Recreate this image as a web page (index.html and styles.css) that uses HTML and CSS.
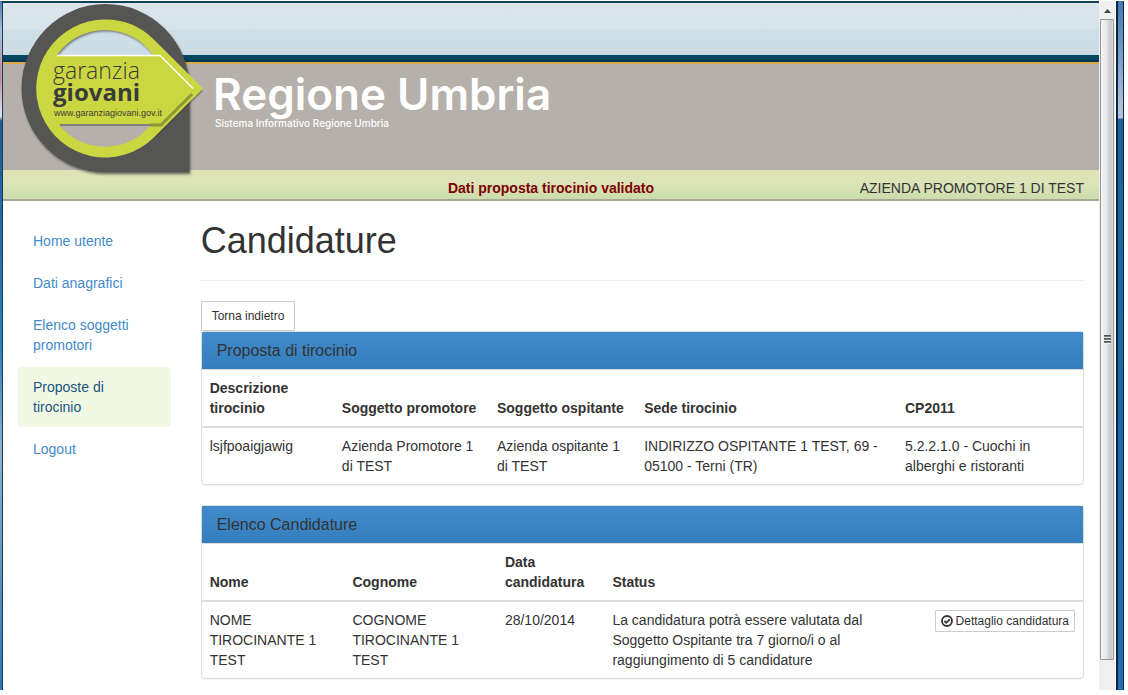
FILE: index.html
```html
<!DOCTYPE html>
<html lang="it">
<head>
<meta charset="utf-8">
<title>Candidature - Regione Umbria</title>
<link rel="stylesheet" href="styles.css">
</head>
<body>
<div class="window">
  <div class="edge-left"></div>
  <div class="page">
    <header class="banner">
      <div class="sky"></div>
      <div class="stripe"></div>
      <div class="brand">
        <p class="brand-name">Regione Umbria</p>
        <p class="brand-sub">Sistema Informativo Regione Umbria</p>
      </div>
      <div class="status-bar">
        <strong class="message">Dati proposta tirocinio validato</strong>
        <span class="user">AZIENDA PROMOTORE 1 DI TEST</span>
      </div>
      <svg class="logo" width="190" height="180" viewBox="18 0 190 180" role="img" aria-label="Garanzia Giovani">
        <defs>
          <filter id="soft" x="-10%" y="-10%" width="120%" height="120%">
            <feDropShadow dx="1" dy="2" stdDeviation="1" flood-color="#333" flood-opacity=".6"/>
          </filter>
        </defs>
        <path filter="url(#soft)" fill="#555753" fill-rule="evenodd" d="M105.500 4A84 84.500 0 0 1 189.500 88.500V172.500H105.500A84 84.250 0 0 1 105.500 4ZM105 29.500A59 59 0 0 0 105 147.500A59 59 0 0 0 105 29.500Z"/>
        <path fill="#41443a" opacity=".4" d="M203 91L156 138L153 135L199 89Z"/>
        <path fill="#cbd740" fill-rule="evenodd" d="M105 19.500A69 69 0 0 1 153.800 39.500L203 88.500L153.800 137.500A69 69 0 1 1 105 19.500ZM57 55H153A58.500 58.500 0 0 0 57 55ZM59 124.500A58.500 58.500 0 0 0 151 124.500Z"/>
        <path fill="none" stroke="#8c9838" stroke-width="3" d="M150 125H161L192 94"/>
        <path fill="none" stroke="#7d827a" stroke-width="2" d="M60 125H151"/>
        <path fill="none" stroke="#fff" stroke-width="1.500" d="M57 55.500H160L193 88.500"/>
        <text class="logo-light" x="53" y="79">garanzia</text>
        <text class="logo-bold" x="53" y="101">giovani</text>
        <text class="logo-url" x="54" y="116">www.garanziagiovani.gov.it</text>
      </svg>
    </header>
    <div class="columns">
      <nav class="sidebar">
        <a href="#">Home utente</a>
        <a href="#">Dati anagrafici</a>
        <a href="#">Elenco soggetti promotori</a>
        <a href="#" class="active" aria-current="page">Proposte di tirocinio</a>
        <a href="#">Logout</a>
      </nav>
      <main class="main">
        <h1>Candidature</h1>
        <button type="button" class="btn">Torna indietro</button>
        <section class="panel">
          <h2>Proposta di tirocinio</h2>
          <table class="proposal">
            <thead>
              <tr><th>Descrizione tirocinio</th><th>Soggetto promotore</th><th>Soggetto ospitante</th><th>Sede tirocinio</th><th>CP2011</th></tr>
            </thead>
            <tbody>
              <tr><td>lsjfpoaigjawig</td><td>Azienda Promotore 1 di TEST</td><td>Azienda ospitante 1 di TEST</td><td>INDIRIZZO OSPITANTE 1 TEST, 69 - 05100 - Terni (TR)</td><td>5.2.2.1.0 - Cuochi in alberghi e ristoranti</td></tr>
            </tbody>
          </table>
        </section>
        <section class="panel">
          <h2>Elenco Candidature</h2>
          <table class="applications">
            <thead>
              <tr><th>Nome</th><th>Cognome</th><th>Data candidatura</th><th>Status</th><th></th></tr>
            </thead>
            <tbody>
              <tr>
                <td>NOME TIROCINANTE 1 TEST</td><td>COGNOME TIROCINANTE 1 TEST</td><td>28/10/2014</td>
                <td>La candidatura potrà essere valutata dal Soggetto Ospitante tra 7 giorno/i o al raggiungimento di 5 candidature</td>
                <td class="action"><button type="button" class="btn btn-small"><svg class="check" width="12" height="12" viewBox="0 0 12 12" aria-hidden="true"><circle cx="6" cy="6" r="5" fill="none" stroke="#333" stroke-width="1.800"/><path d="M3.400 6L5.300 7.800L8.700 4.300" fill="none" stroke="#333" stroke-width="1.800"/></svg>Dettaglio candidatura</button></td>
              </tr>
            </tbody>
          </table>
        </section>
      </main>
    </div>
  </div>
  <div class="scrollbar">
    <svg class="arrow" width="15" height="18" viewBox="0 0 15 18" aria-hidden="true"><path d="M4 12L7.500 8L11 12Z" fill="#444"/></svg>
    <div class="thumb"><span class="grip"></span></div>
  </div>
  <div class="edge-right"></div>
</div>
</body>
</html>
```
FILE: styles.css
```css
* { box-sizing: border-box; }
body {
  margin: 0;
  background: #fff;
  color: #333;
  font: 14px/20px "Liberation Sans", Arial, sans-serif;
}
.window {
  display: flex;
  min-height: calc(100vh - 5px);
  padding: 1px 4px 0 0;
}
.edge-left {
  width: 3px;
  border-right: 1px solid #183a58;
  background: linear-gradient(#4b7db4 0, #a9bfdc 30px, #c08c98 75px, #dfe6f0 115px, #1f5b9a 120px, #2d7fc0 50%, #8fb2cc 65%, #2c78b4);
}
.page { flex: 1; min-width: 0; }

.banner { position: relative; border-top: 2px solid #0f4353; }
.sky {
  height: 52px;
  background: linear-gradient(#dbe6ec, #d7e3ea 27px, #d0dfe7 27px, #cddde5);
}
.stripe {
  height: 9px;
  border-bottom: 2px solid #dcaa4e;
  background: linear-gradient(#004a67, #00405a 5px, #06303f);
}
.brand {
  height: 106px;
  padding: 7px 15px 0 210px;
  background: #b5b0aa;
  color: #fff;
  font-family: Inter, "Open Sans", sans-serif;
  font-weight: 600;
}
.brand p { margin: 0; }
.brand-name { font-size: 44px; line-height: 46px; }
.brand .brand-sub { padding-left: 2px; font-size: 10px; font-weight: 500; line-height: 12px; }
.status-bar {
  display: grid;
  grid-template-columns: 1fr auto 1fr;
  height: 31px;
  padding: 8px 15px 0;
  border-bottom: 2px solid #aca699;
  background: linear-gradient(#dfe4b7, #dbe3b8 50%, #cbdcaa);
}
.message { grid-column: 2; color: #800000; }
.user { text-align: right; }
.logo { position: absolute; top: -3px; left: 15px; }
.logo text { fill: #3b3b3b; font-family: "Open Sans", sans-serif; }
.logo .logo-light { font-size: 23px; font-weight: 300; }
.logo .logo-bold { font-size: 24px; font-weight: 700; }
.logo .logo-url { font-family: "Liberation Sans", Arial, sans-serif; font-size: 9px; }

.columns { display: flex; padding-top: 20px; }
.sidebar {
  display: flex;
  flex-direction: column;
  gap: 2px;
  width: 16.6667%;
  padding: 0 15px;
}
.sidebar a {
  padding: 10px 15px;
  border-radius: 4px;
  color: #428bca;
  text-decoration: none;
}
.sidebar .active { background: #f1f9e4; color: #1b5480; }
.main { flex: 1; min-width: 0; padding: 0 15px; }
h1 {
  margin: 0 0 20px;
  padding-bottom: 19px;
  border-bottom: 1px solid #eee;
  font-size: 36px;
  font-weight: 400;
  line-height: 40px;
}
.btn {
  display: block;
  padding: 5px 10px;
  border: 1px solid #ccc;
  border-radius: 1px;
  background: #fff;
  color: #333;
  font: 12px/18px "Liberation Sans", Arial, sans-serif;
}
.btn-small {
  display: inline-flex;
  align-items: center;
  gap: 3px;
  padding: 1px 5px;
  white-space: nowrap;
}
.panel {
  margin-bottom: 20px;
  border: 1px solid #ddd;
  border-radius: 4px;
  box-shadow: 0 1px 1px rgba(0, 0, 0, .05);
}
.panel:last-child { margin-bottom: 10px; }
.panel h2 {
  margin: 0;
  padding: 10px 15px;
  border-bottom: 1px solid #ddd;
  background: linear-gradient(#428bca, #357ebd);
  font-size: 16px;
  font-weight: 400;
  line-height: 17px;
}
table { width: 100%; table-layout: fixed; border-collapse: collapse; }
th, td { padding: 8px; text-align: left; }
th { vertical-align: bottom; }
td { vertical-align: top; }
thead { border-bottom: 2px solid #ddd; }
.proposal th:nth-child(1) { width: 15%; }
.proposal th:nth-child(2) { width: 17.6%; }
.proposal th:nth-child(3) { width: 16.7%; }
.proposal th:nth-child(4) { width: 29.6%; }
.applications th:nth-child(1) { width: 16.2%; }
.applications th:nth-child(2) { width: 17.3%; }
.applications th:nth-child(3) { width: 12.2%; }
.applications th:nth-child(5) { width: 18.7%; }
.applications .action { text-align: right; }

.scrollbar {
  display: flex;
  flex-direction: column;
  width: 17px;
  padding: 0 1px 30px;
  border-right: 1px solid #fff;
  background: #f0f0f0;
}
.thumb {
  display: flex;
  flex: 1;
  align-items: center;
  justify-content: center;
  border: 1px solid #979797;
  border-radius: 1px;
  background: linear-gradient(90deg, #f5f5f5, #e6e6e8 45%, #c6c6cc 80%, #dcdcde);
}
.grip {
  width: 7px;
  height: 9px;
  background: repeating-linear-gradient(#444 0, #888 2px, #eee 2px, #eee 3px);
}
.edge-right {
  width: 8px;
  border: solid #0b2540;
  border-width: 0 1px 0 2px;
  background: linear-gradient(#4478b0, #b7c8df 117px, #20629f 118px, #2470b5);
}
```
